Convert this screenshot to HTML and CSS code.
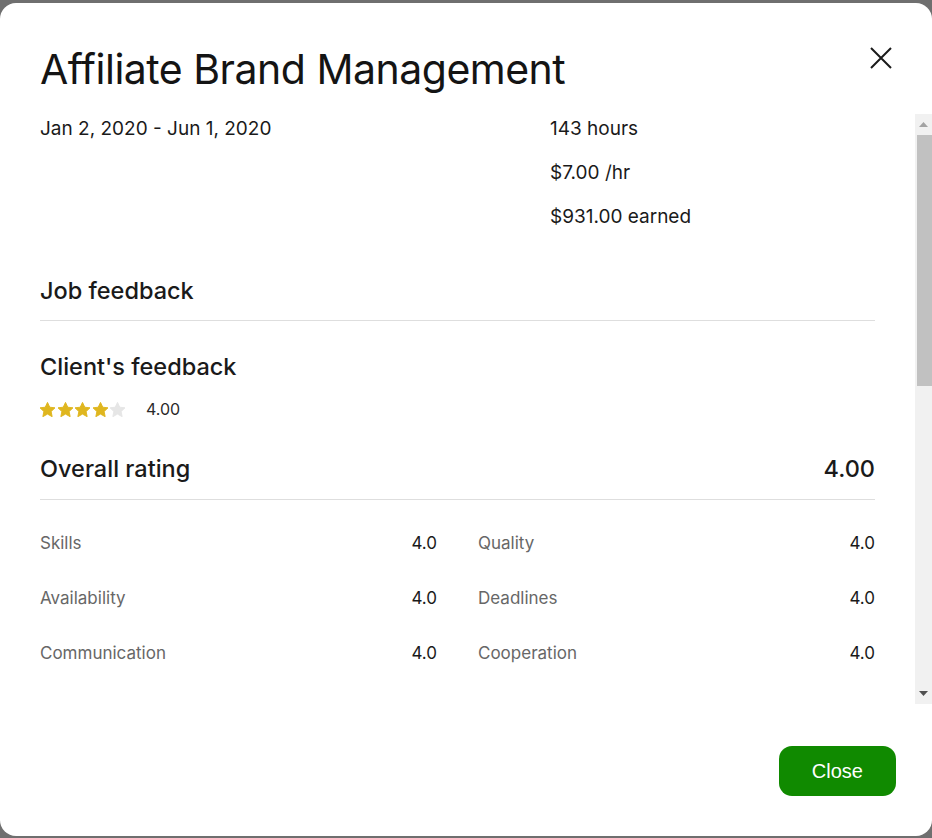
FILE: index.html
```html
<!DOCTYPE html>
<html lang="en">
<head>
<meta charset="utf-8">
<title>Affiliate Brand Management</title>
<link rel="stylesheet" href="styles.css">
</head>
<body>
<div class="backdrop">
  <div class="modal">
    <header class="modal-header">
      <h1 class="title">Affiliate Brand Management</h1>
      <button class="close-x" aria-label="Close">
        <svg width="22" height="22" viewBox="0 0 22 22"><path d="M1 1 L21 21 M21 1 L1 21" stroke="#1a1a1a" stroke-width="2" fill="none"/></svg>
      </button>
    </header>
    <div class="modal-body">
      <div class="body-inner">
        <div class="summary">
          <div class="dates">Jan 2, 2020 - Jun 1, 2020</div>
          <div class="stats">
            <div>143 hours</div>
            <div>$7.00 /hr</div>
            <div>$931.00 earned</div>
          </div>
        </div>

        <h2 class="section-title">Job feedback</h2>

        <h3 class="sub-title">Client's feedback</h3>
        <div class="stars-row">
          <svg class="star on" viewBox="2.5 2 19 19"><path d="M12 2.5l2.9 6.1 6.6.8-4.9 4.6 1.3 6.6L12 17.3l-5.9 3.3 1.3-6.6-4.9-4.6 6.6-.8z"/></svg>
          <svg class="star on" viewBox="2.5 2 19 19"><path d="M12 2.5l2.9 6.1 6.6.8-4.9 4.6 1.3 6.6L12 17.3l-5.9 3.3 1.3-6.6-4.9-4.6 6.6-.8z"/></svg>
          <svg class="star on" viewBox="2.5 2 19 19"><path d="M12 2.5l2.9 6.1 6.6.8-4.9 4.6 1.3 6.6L12 17.3l-5.9 3.3 1.3-6.6-4.9-4.6 6.6-.8z"/></svg>
          <svg class="star on" viewBox="2.5 2 19 19"><path d="M12 2.5l2.9 6.1 6.6.8-4.9 4.6 1.3 6.6L12 17.3l-5.9 3.3 1.3-6.6-4.9-4.6 6.6-.8z"/></svg>
          <svg class="star off" viewBox="2.5 2 19 19"><path d="M12 2.5l2.9 6.1 6.6.8-4.9 4.6 1.3 6.6L12 17.3l-5.9 3.3 1.3-6.6-4.9-4.6 6.6-.8z"/></svg>
          <span class="score">4.00</span>
        </div>

        <div class="overall">
          <span>Overall rating</span>
          <span>4.00</span>
        </div>

        <div class="ratings">
          <div class="rating"><span class="label">Skills</span><span class="value">4.0</span></div>
          <div class="rating"><span class="label">Quality</span><span class="value">4.0</span></div>
          <div class="rating"><span class="label">Availability</span><span class="value">4.0</span></div>
          <div class="rating"><span class="label">Deadlines</span><span class="value">4.0</span></div>
          <div class="rating"><span class="label">Communication</span><span class="value">4.0</span></div>
          <div class="rating"><span class="label">Cooperation</span><span class="value">4.0</span></div>
        </div>
      </div>
      <div class="scrollbar" aria-hidden="true">
        <div class="sb-btn">
          <svg width="9" height="5" viewBox="0 0 9 5"><path d="M0 5 L4.5 0 L9 5z" fill="#a3a3a3"/></svg>
        </div>
        <div class="sb-thumb"></div>
        <div class="sb-track"></div>
        <div class="sb-btn">
          <svg width="9" height="5" viewBox="0 0 9 5"><path d="M0 0 L4.5 5 L9 0z" fill="#505050"/></svg>
        </div>
      </div>
    </div>
    <footer class="modal-footer">
      <button class="btn-close">Close</button>
    </footer>
  </div>
</div>
</body>
</html>
```

FILE: styles.css
```css
html, body {
  margin: 0;
  padding: 0;
  height: 838px;
  overflow: hidden;
}

body {
  font-family: "Inter", "Liberation Sans", Arial, sans-serif;
  color: #1a1a1a;
  background: #6f6f6f;
}

.backdrop {
  height: 838px;
  padding-top: 3px;
  box-sizing: border-box;
}

.modal {
  height: 833px;
  background: #ffffff;
  border-radius: 16px;
  display: flex;
  flex-direction: column;
  overflow: hidden;
}

.modal-header {
  display: flex;
  justify-content: space-between;
  align-items: flex-start;
  padding: 41px 40px 20px 40px;
  flex: none;
}

.title {
  margin: 0;
  font-size: 41px;
  line-height: 50px;
  font-weight: 400;
  letter-spacing: -0.5px;
  color: #141414;
}

.close-x {
  margin-top: 3px;
  width: 22px;
  height: 22px;
  padding: 0;
  border: 0;
  background: transparent;
  display: block;
}

.close-x svg {
  display: block;
}

.modal-body {
  flex: none;
  height: 590px;
  display: flex;
  overflow: hidden;
}

.body-inner {
  flex: 1;
  min-width: 0;
  padding: 0 40px;
}

.scrollbar {
  flex: none;
  width: 17px;
  display: flex;
  flex-direction: column;
  background: #f1f1f1;
}

.sb-btn {
  height: 21px;
  display: flex;
  align-items: center;
  justify-content: center;
  flex: none;
}

.sb-btn svg {
  display: block;
}

.sb-thumb {
  height: 251px;
  margin-left: 2px;
  background: #c1c1c1;
  flex: none;
}

.sb-track {
  flex: 1;
}

.summary {
  display: grid;
  grid-template-columns: 510px 1fr;
  font-size: 19px;
  line-height: 28px;
  padding-top: 1px;
}

.stats {
  display: flex;
  flex-direction: column;
  gap: 16px;
}

.section-title {
  margin: 44px 0 0;
  font-size: 23.5px;
  line-height: 32px;
  font-weight: 500;
  padding-bottom: 13px;
  border-bottom: 1px solid #dedede;
}

.sub-title {
  margin: 30px 0 0;
  font-size: 23.5px;
  line-height: 32px;
  font-weight: 500;
}

.stars-row {
  margin-top: 16px;
  height: 20px;
  display: flex;
  align-items: center;
  gap: 2.5px;
}

.star {
  width: 15px;
  height: 15px;
  display: block;
}

.star path {
  stroke-linejoin: round;
  stroke-width: 1.2;
}

.star.on path {
  fill: #dfb61f;
  stroke: #dfb61f;
}

.star.off path {
  fill: #e6e6e6;
  stroke: #e6e6e6;
}

.score {
  margin-left: 18.5px;
  font-size: 16px;
  color: #2a2a2a;
}

.overall {
  margin-top: 34px;
  display: flex;
  justify-content: space-between;
  font-size: 23.5px;
  line-height: 32px;
  font-weight: 500;
  padding-bottom: 14px;
  border-bottom: 1px solid #dedede;
}

.ratings {
  margin-top: 31px;
  display: grid;
  grid-template-columns: 1fr 1fr;
  column-gap: 41px;
  row-gap: 31px;
}

.rating {
  display: flex;
  justify-content: space-between;
  line-height: 24px;
  font-size: 17px;
}

.label {
  color: #676767;
}

.value {
  color: #1a1a1a;
}

.modal-footer {
  flex: 1;
  display: flex;
  justify-content: flex-end;
  align-items: flex-start;
  padding: 42px 36px 0 0;
}

.btn-close {
  height: 50px;
  padding: 0 33px;
  border: 0;
  border-radius: 13px;
  background: #108a00;
  color: #ffffff;
  font-family: "Liberation Sans", Arial, sans-serif;
  font-size: 20px;
  line-height: 50px;
}
```
